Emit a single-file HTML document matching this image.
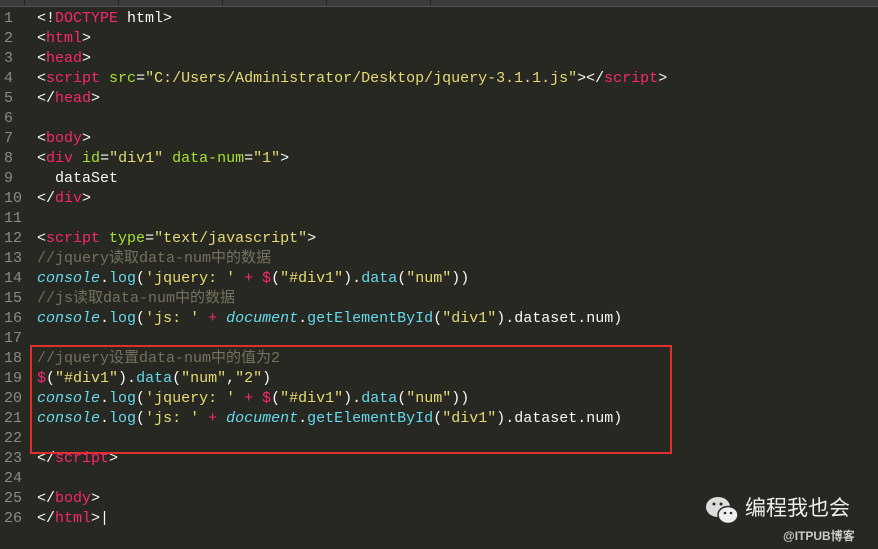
<!DOCTYPE html>
<html><head><meta charset="utf-8"><style>
body{margin:0;width:878px;height:549px;background:#272822;overflow:hidden;position:relative;font-family:"Liberation Mono","Noto Sans CJK SC",monospace;}
.top{position:absolute;left:0;top:0;width:878px;height:6px;background:#3c3c3c;border-bottom:1px solid #555;}
.top i{position:absolute;top:0;width:1px;height:6px;background:#222}
.g{position:absolute;left:0;top:9px;width:30px;color:#8a8b85;font-size:15px;line-height:20px;}
.g div{padding-left:4px;height:20px}
.c{position:absolute;left:37px;top:9px;color:#f8f8f2;font-size:15px;line-height:20px;white-space:pre;}
.c div{height:20px;overflow:visible}
.t{color:#f92672}.a{color:#a6e22e}.s{color:#e6db74}.m{color:#75715e}.b{color:#66d9ef;font-style:italic}.f{color:#66d9ef}
.box{position:absolute;left:30px;top:345px;width:638px;height:105px;border:2px solid #e0302e;}
.wm{position:absolute;left:705px;top:494px;color:#eee;font-family:"Liberation Sans","Noto Sans CJK SC",sans-serif;}
</style></head><body>
<div class="top"><i style="left:24px"></i><i style="left:118px"></i><i style="left:222px"></i><i style="left:326px"></i><i style="left:430px"></i></div>
<div class="g"><div>1</div><div>2</div><div>3</div><div>4</div><div>5</div><div>6</div><div>7</div><div>8</div><div>9</div><div>10</div><div>11</div><div>12</div><div>13</div><div>14</div><div>15</div><div>16</div><div>17</div><div>18</div><div>19</div><div>20</div><div>21</div><div>22</div><div>23</div><div>24</div><div>25</div><div>26</div></div>
<div class="c"><div>&lt;!<span class="t">DOCTYPE</span> html&gt;</div><div>&lt;<span class="t">html</span>&gt;</div><div>&lt;<span class="t">head</span>&gt;</div><div>&lt;<span class="t">script</span> <span class="a">src</span>=<span class="s">"C:/Users/Administrator/Desktop/jquery-3.1.1.js"</span>&gt;&lt;/<span class="t">script</span>&gt;</div><div>&lt;/<span class="t">head</span>&gt;</div><div></div><div>&lt;<span class="t">body</span>&gt;</div><div>&lt;<span class="t">div</span> <span class="a">id</span>=<span class="s">"div1"</span> <span class="a">data-num</span>=<span class="s">"1"</span>&gt;</div><div>  dataSet</div><div>&lt;/<span class="t">div</span>&gt;</div><div></div><div>&lt;<span class="t">script</span> <span class="a">type</span>=<span class="s">"text/javascript"</span>&gt;</div><div><span class="m">//jquery读取data-num中的数据</span></div><div><span class="b">console</span>.<span class="f">log</span>(<span class="s">'jquery: '</span> <span class="t">+</span> <span class="t">$</span>(<span class="s">"#div1"</span>).<span class="f">data</span>(<span class="s">"num"</span>))</div><div><span class="m">//js读取data-num中的数据</span></div><div><span class="b">console</span>.<span class="f">log</span>(<span class="s">'js: '</span> <span class="t">+</span> <span class="b">document</span>.<span class="f">getElementById</span>(<span class="s">"div1"</span>).dataset.num)</div><div></div><div><span class="m">//jquery设置data-num中的值为2</span></div><div><span class="t">$</span>(<span class="s">"#div1"</span>).<span class="f">data</span>(<span class="s">"num"</span>,<span class="s">"2"</span>)</div><div><span class="b">console</span>.<span class="f">log</span>(<span class="s">'jquery: '</span> <span class="t">+</span> <span class="t">$</span>(<span class="s">"#div1"</span>).<span class="f">data</span>(<span class="s">"num"</span>))</div><div><span class="b">console</span>.<span class="f">log</span>(<span class="s">'js: '</span> <span class="t">+</span> <span class="b">document</span>.<span class="f">getElementById</span>(<span class="s">"div1"</span>).dataset.num)</div><div></div><div>&lt;/<span class="t">script</span>&gt;</div><div></div><div>&lt;/<span class="t">body</span>&gt;</div><div>&lt;/<span class="t">html</span>&gt;|</div></div>
<div class="box"></div>
<div class="wm">
<svg width="36" height="30" style="position:absolute;left:0;top:2px" viewBox="0 0 36 30"><ellipse cx="13" cy="11" rx="12" ry="10" fill="#ddd"/><ellipse cx="23" cy="19" rx="10" ry="8.5" fill="#eee" stroke="#272822" stroke-width="1.5"/><circle cx="9" cy="8" r="1.5" fill="#272822"/><circle cx="16" cy="8" r="1.5" fill="#272822"/><circle cx="20" cy="17" r="1.3" fill="#272822"/><circle cx="26" cy="17" r="1.3" fill="#272822"/></svg>
<div style="position:absolute;left:40px;top:0;font-size:21px;white-space:nowrap;line-height:30px">编程我也会</div>
<div style="position:absolute;left:78px;top:33px;font-size:12px;font-weight:bold;white-space:nowrap;color:#ccc">@ITPUB博客</div>
</div>
</body></html>
